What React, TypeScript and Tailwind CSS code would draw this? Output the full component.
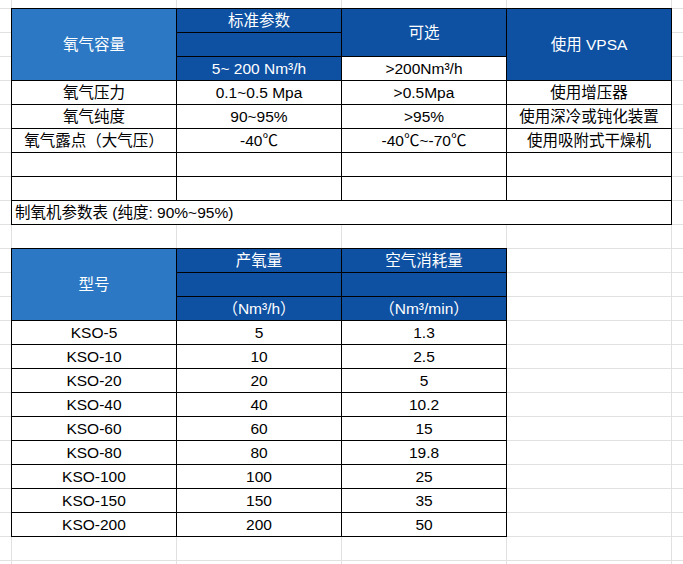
import React from "react";

const light = "bg-[#2c78c4] text-white";
const dark = "bg-[#0e50a2] text-white";
const plain = "bg-white text-black";

const params = [
  ["氧气压力", "0.1~0.5 Mpa", ">0.5Mpa", "使用增压器"],
  ["氧气纯度", "90~95%", ">95%", "使用深冷或钝化装置"],
  ["氧气露点（大气压）", "-40℃", "-40℃~-70℃", "使用吸附式干燥机"],
  ["", "", "", ""],
  ["", "", "", ""],
];

const models = [
  ["KSO-5", "5", "1.3"],
  ["KSO-10", "10", "2.5"],
  ["KSO-20", "20", "5"],
  ["KSO-40", "40", "10.2"],
  ["KSO-60", "60", "15"],
  ["KSO-80", "80", "19.8"],
  ["KSO-100", "100", "25"],
  ["KSO-150", "150", "35"],
  ["KSO-200", "200", "50"],
];

const Cell = ({ className = "", children }: { className?: string; children?: React.ReactNode }) => (
  <div className={`flex items-center justify-center whitespace-nowrap ${className}`}>{children}</div>
);

export default function App() {
  return (
    <div
      className="min-h-screen w-full bg-white pt-[8px] pl-[11px] text-[15.5px] leading-none bg-[linear-gradient(to_right,#e1e1e1_1px,transparent_1px),linear-gradient(to_bottom,#e1e1e1_1px,transparent_1px)] bg-[size:165px_24px] bg-[position:11px_8px]"
      style={{ fontFamily: '"Liberation Sans", Arial, "Noto Sans CJK SC", sans-serif' }}
    >
      {/* 参数表 */}
      <div className="grid w-fit grid-cols-[repeat(4,164px)] grid-rows-[repeat(9,23px)] gap-px bg-black p-px">
        <Cell className={`row-span-3 ${light}`}>氧气容量</Cell>
        <Cell className={dark}>标准参数</Cell>
        <Cell className={`row-span-2 ${dark}`}>可选</Cell>
        <Cell className={`row-span-3 ${dark}`}>使用 VPSA</Cell>
        <Cell className={dark} />
        <Cell className={dark}>5~ 200 Nm³/h</Cell>
        <Cell className={plain}>&gt;200Nm³/h</Cell>
        {params.map((row, i) =>
          row.map((v, j) => (
            <Cell key={`${i}-${j}`} className={plain}>
              {v}
            </Cell>
          ))
        )}
        <Cell className={`col-span-4 justify-start pl-[3px] ${plain}`}>制氧机参数表 (纯度: 90%~95%)</Cell>
      </div>

      {/* 型号表 */}
      <div className="mt-[23px] grid w-fit grid-cols-[repeat(3,164px)] grid-rows-[repeat(12,23px)] gap-px bg-black p-px">
        <Cell className={`row-span-3 ${light}`}>型号</Cell>
        <Cell className={dark}>产氧量</Cell>
        <Cell className={dark}>空气消耗量</Cell>
        <Cell className={dark} />
        <Cell className={dark} />
        <Cell className={dark}>（Nm³/h）</Cell>
        <Cell className={dark}>（Nm³/min）</Cell>
        {models.map((row) =>
          row.map((v, j) => (
            <Cell key={`${row[0]}-${j}`} className={plain}>
              {v}
            </Cell>
          ))
        )}
      </div>
    </div>
  );
}
